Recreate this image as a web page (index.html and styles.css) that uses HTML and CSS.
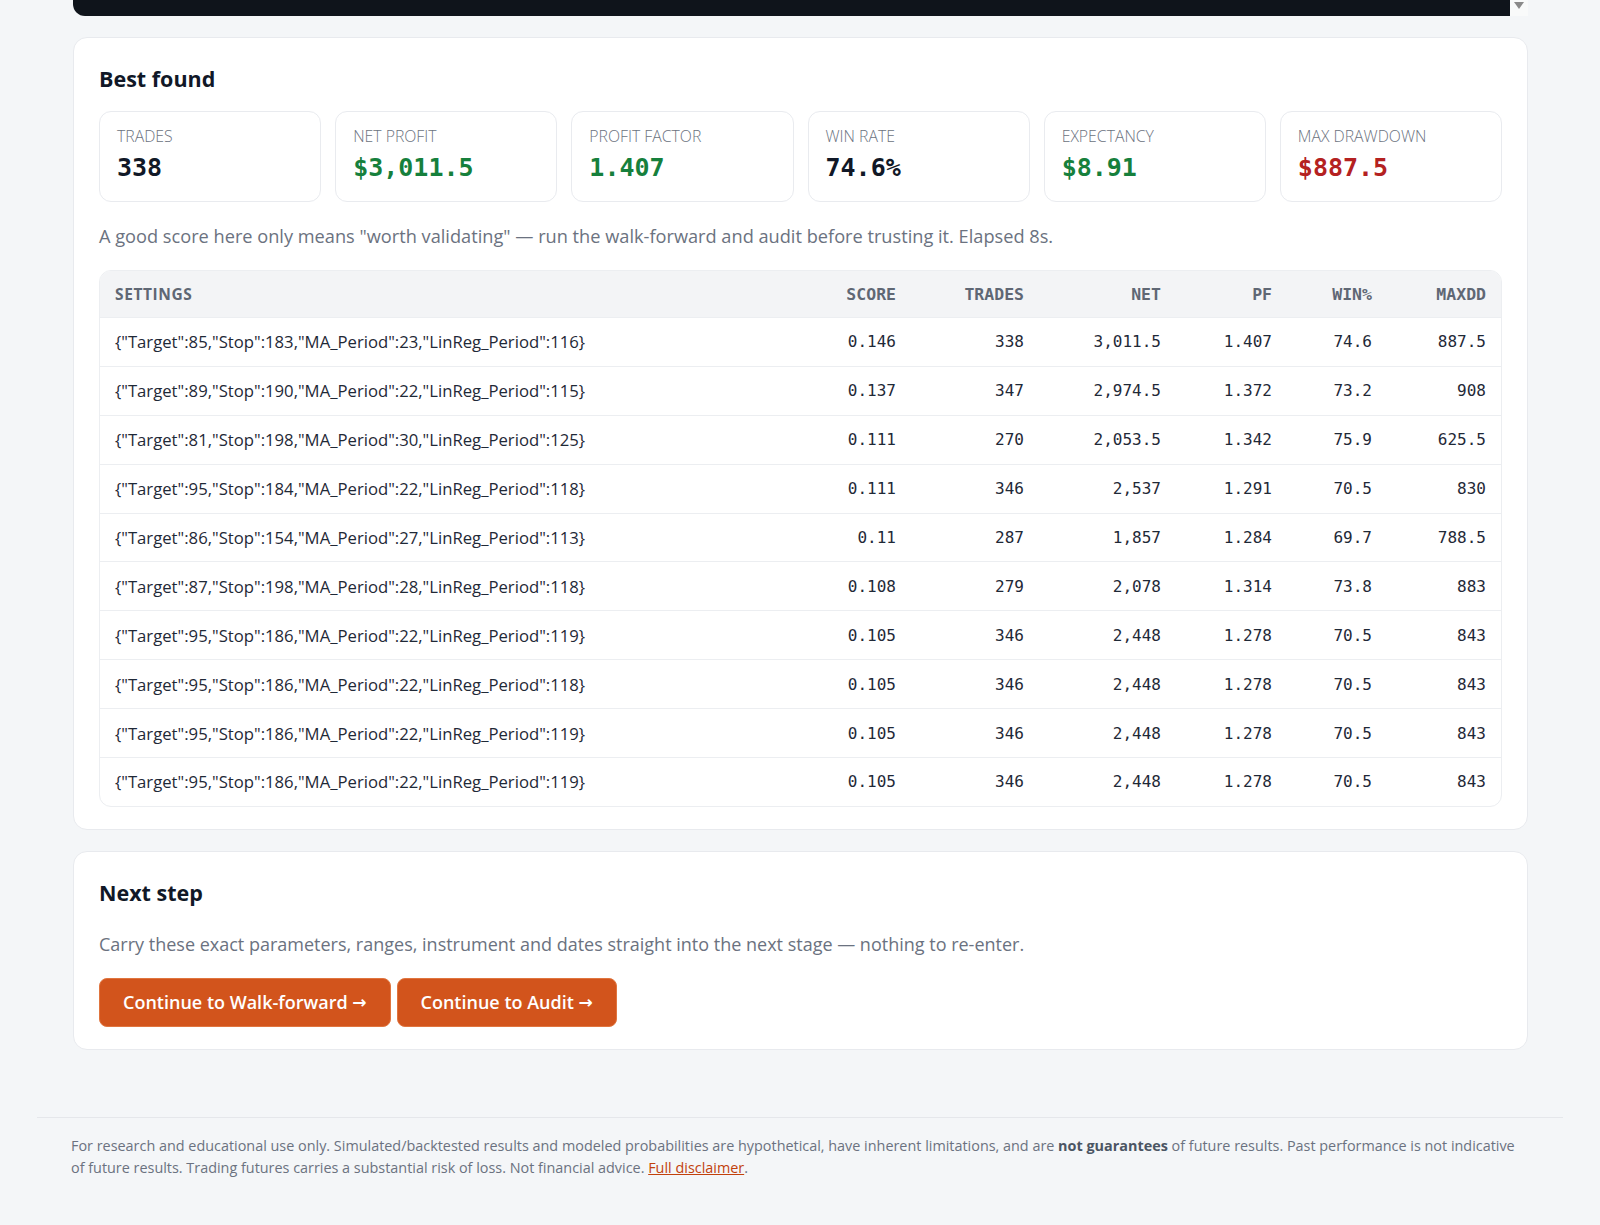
FILE: index.html
```html
<!DOCTYPE html>
<html lang="en">
  <head>
    <meta charset="utf-8" />
    <title>Optimizer results</title>
    <link rel="stylesheet" href="styles.css">
  </head>

  <body>
    <div class="page">
      <div class="console-tail">
        <div class="console-body"></div>
        <div class="scroll-track"><span class="scroll-arrow"></span></div>
      </div>

      <section class="card">
        <h2>Best found</h2>
        <div class="stats">
          <div class="stat">
            <div class="stat-label">Trades</div>
            <div class="stat-value">338</div>
          </div>
          <div class="stat">
            <div class="stat-label">Net profit</div>
            <div class="stat-value pos">$3,011.5</div>
          </div>
          <div class="stat">
            <div class="stat-label">Profit factor</div>
            <div class="stat-value pos">1.407</div>
          </div>
          <div class="stat">
            <div class="stat-label">Win rate</div>
            <div class="stat-value">74.6%</div>
          </div>
          <div class="stat">
            <div class="stat-label">Expectancy</div>
            <div class="stat-value pos">$8.91</div>
          </div>
          <div class="stat">
            <div class="stat-label">Max drawdown</div>
            <div class="stat-value neg">$887.5</div>
          </div>
        </div>

        <p class="muted">A good score here only means "worth validating" — run the walk-forward and audit before trusting it. Elapsed 8s.</p>

        <div class="table-wrap">
          <table class="results">
            <colgroup>
              <col />
              <col class="c-score" />
              <col class="c-trades" />
              <col class="c-net" />
              <col class="c-pf" />
              <col class="c-win" />
              <col class="c-dd" />
            </colgroup>
            <thead>
              <tr>
                <th>Settings</th>
                <th class="num">Score</th>
                <th class="num">Trades</th>
                <th class="num">Net</th>
                <th class="num">PF</th>
                <th class="num">Win%</th>
                <th class="num">MaxDD</th>
              </tr>
            </thead>
            <tbody>
              <tr>
                <td>{"Target":85,"Stop":183,"MA_Period":23,"LinReg_Period":116}</td>
                <td class="num">0.146</td><td class="num">338</td><td class="num">3,011.5</td>
                <td class="num">1.407</td><td class="num">74.6</td><td class="num">887.5</td>
              </tr>
              <tr>
                <td>{"Target":89,"Stop":190,"MA_Period":22,"LinReg_Period":115}</td>
                <td class="num">0.137</td><td class="num">347</td><td class="num">2,974.5</td>
                <td class="num">1.372</td><td class="num">73.2</td><td class="num">908</td>
              </tr>
              <tr>
                <td>{"Target":81,"Stop":198,"MA_Period":30,"LinReg_Period":125}</td>
                <td class="num">0.111</td><td class="num">270</td><td class="num">2,053.5</td>
                <td class="num">1.342</td><td class="num">75.9</td><td class="num">625.5</td>
              </tr>
              <tr>
                <td>{"Target":95,"Stop":184,"MA_Period":22,"LinReg_Period":118}</td>
                <td class="num">0.111</td><td class="num">346</td><td class="num">2,537</td>
                <td class="num">1.291</td><td class="num">70.5</td><td class="num">830</td>
              </tr>
              <tr>
                <td>{"Target":86,"Stop":154,"MA_Period":27,"LinReg_Period":113}</td>
                <td class="num">0.11</td><td class="num">287</td><td class="num">1,857</td>
                <td class="num">1.284</td><td class="num">69.7</td><td class="num">788.5</td>
              </tr>
              <tr>
                <td>{"Target":87,"Stop":198,"MA_Period":28,"LinReg_Period":118}</td>
                <td class="num">0.108</td><td class="num">279</td><td class="num">2,078</td>
                <td class="num">1.314</td><td class="num">73.8</td><td class="num">883</td>
              </tr>
              <tr>
                <td>{"Target":95,"Stop":186,"MA_Period":22,"LinReg_Period":119}</td>
                <td class="num">0.105</td><td class="num">346</td><td class="num">2,448</td>
                <td class="num">1.278</td><td class="num">70.5</td><td class="num">843</td>
              </tr>
              <tr>
                <td>{"Target":95,"Stop":186,"MA_Period":22,"LinReg_Period":118}</td>
                <td class="num">0.105</td><td class="num">346</td><td class="num">2,448</td>
                <td class="num">1.278</td><td class="num">70.5</td><td class="num">843</td>
              </tr>
              <tr>
                <td>{"Target":95,"Stop":186,"MA_Period":22,"LinReg_Period":119}</td>
                <td class="num">0.105</td><td class="num">346</td><td class="num">2,448</td>
                <td class="num">1.278</td><td class="num">70.5</td><td class="num">843</td>
              </tr>
              <tr>
                <td>{"Target":95,"Stop":186,"MA_Period":22,"LinReg_Period":119}</td>
                <td class="num">0.105</td><td class="num">346</td><td class="num">2,448</td>
                <td class="num">1.278</td><td class="num">70.5</td><td class="num">843</td>
              </tr>
            </tbody>
          </table>
        </div>
      </section>

      <section class="card">
        <h2>Next step</h2>
        <p class="muted">Carry these exact parameters, ranges, instrument and dates straight into the next stage — nothing to re-enter.</p>
        <div class="actions">
          <button class="btn">Continue to Walk-forward <span class="arrow">→</span></button>
          <button class="btn">Continue to Audit <span class="arrow">→</span></button>
        </div>
      </section>
    </div>

    <footer class="disclaimer">
      For research and educational use only. Simulated/backtested results and modeled probabilities are hypothetical, have inherent limitations, and are <strong>not guarantees</strong> of future results. Past performance is not indicative of future results. Trading futures carries a substantial risk of loss. Not financial advice. <a href="#">Full disclaimer</a>.
    </footer>
  </body>
</html>
```

FILE: styles.css
```css
body {
  margin: 0;
  background-color: #f4f6f8;
  color: #111827;
  font-family: "Open Sans", "Noto Sans", sans-serif;
}

.page {
  width: 1455px;
  margin: 0 auto;
  padding-left: 1px;
}

/* bottom of the log panel above, scrolled away */
.console-tail {
  display: flex;
  height: 16px;
  margin-bottom: 21px;
}

.console-body {
  flex: 1;
  background-color: #0f141b;
  border-bottom-left-radius: 12px;
}

.scroll-track {
  width: 18px;
  background-color: #f9fafa;
  display: flex;
  justify-content: center;
}

.scroll-arrow {
  width: 0;
  height: 0;
  margin-top: 2px;
  border-left: 5px solid transparent;
  border-right: 5px solid transparent;
  border-top: 7px solid #8a8a8a;
}

.card {
  background-color: #fff;
  border: 1px solid #e8eaee;
  border-radius: 14px;
  padding: 26px 25px 22px;
  margin-bottom: 21px;
}

.card h2 {
  margin: 0;
  font-size: 21.5px;
  font-weight: 700;
  line-height: 29px;
  color: #111827;
}

.stats {
  display: grid;
  grid-template-columns: repeat(6, 1fr);
  gap: 14px;
  margin-top: 18px;
}

.stat {
  border: 1px solid #e9ebef;
  border-radius: 12px;
  padding: 14px 17px 17px;
}

.stat-label {
  font-size: 15.8px;
  font-weight: 300;
  text-transform: uppercase;
  color: #6b7280;
  line-height: 20px;
}

.stat-value {
  margin-top: 6px;
  font-family: "DejaVu Sans Mono", monospace;
  font-weight: 700;
  font-size: 25px;
  line-height: 32px;
  color: #111827;
}

.pos {
  color: #16803c;
}

.neg {
  color: #b42121;
}

.muted {
  margin: 21px 0 0;
  font-size: 18.2px;
  line-height: 26px;
  color: #6b7280;
}

.card h2 + .muted {
  margin-top: 24px;
  font-size: 18px;
}

.table-wrap {
  margin-top: 21px;
  border: 1px solid #eceef1;
  border-radius: 12px;
  overflow: hidden;
}

.results {
  width: 100%;
  border-collapse: collapse;
  table-layout: fixed;
}

.c-score { width: 128px; }
.c-trades { width: 128px; }
.c-net { width: 137px; }
.c-pf { width: 111px; }
.c-win { width: 100px; }
.c-dd { width: 114px; }

.results th {
  background-color: #f3f4f6;
  height: 46px;
  padding: 0 15px;
  text-align: left;
  font-size: 15.5px;
  font-weight: 700;
  text-transform: uppercase;
  color: #5f6774;
  letter-spacing: 0.6px;
}

.results th.num {
  font-family: "DejaVu Sans Mono", monospace;
  font-size: 16.5px;
  letter-spacing: 0;
}

.results td {
  height: 47.9px;
  padding: 0 15px;
  border-top: 1px solid #eceef1;
  font-size: 16.7px;
  color: #1f2937;
  white-space: nowrap;
}

.results .num {
  text-align: right;
}

.results td.num {
  font-family: "DejaVu Sans Mono", monospace;
  font-size: 16px;
}

.card .muted + .actions {
  margin-top: 21px;
}

.actions {
  display: flex;
  gap: 6px;
}

.btn {
  height: 49px;
  padding: 0 23px;
  background-color: #d2541c;
  border: 1px solid #e0753f;
  border-radius: 8px;
  color: #fff;
  font-family: "Open Sans", "Noto Sans", sans-serif;
  font-size: 18px;
  font-weight: 600;
  cursor: pointer;
}

.btn .arrow {
  font-family: "DejaVu Sans", sans-serif;
  font-size: 17px;
  position: relative;
  top: -1px;
}

.disclaimer {
  width: 1458px;
  margin: 67px auto 0;
  padding: 17px 34px 40px;
  border-top: 1px solid #e5e7eb;
  font-size: 14.4px;
  line-height: 22.4px;
  color: #6b7280;
}

.disclaimer strong {
  color: #4b5563;
}

.disclaimer a {
  color: #c2410c;
}
```
